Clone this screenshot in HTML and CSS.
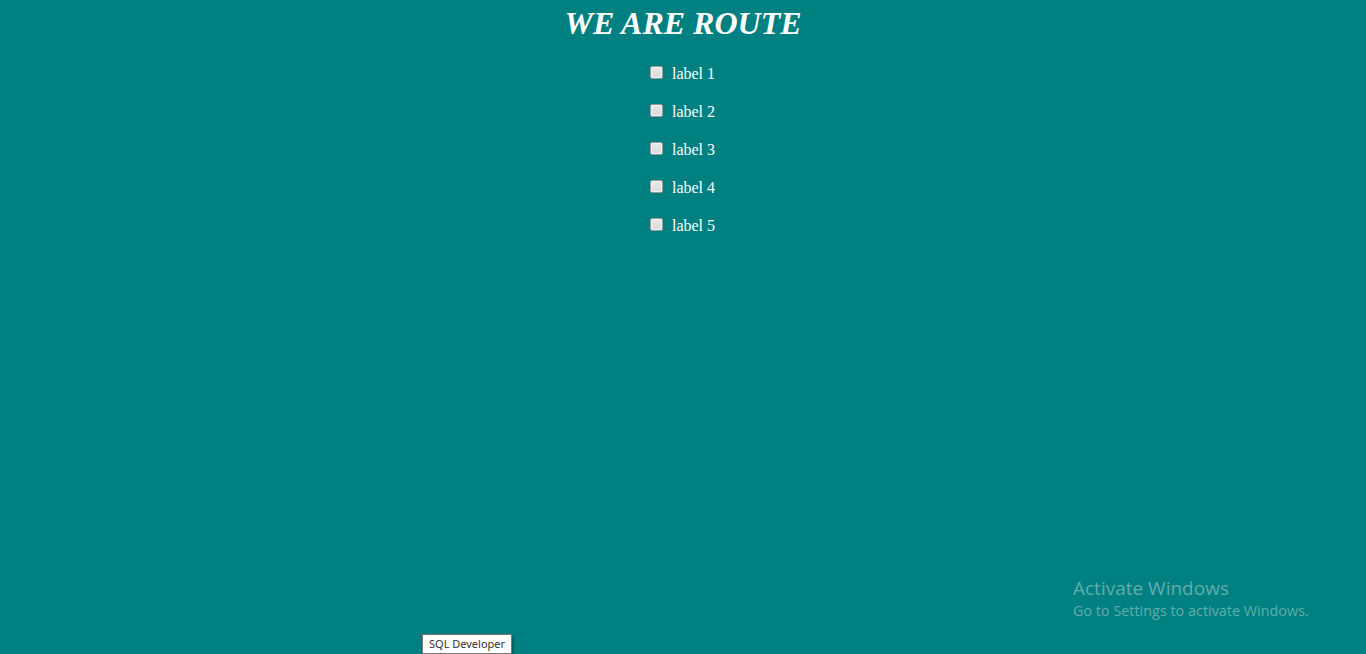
FILE: index.html
```html
<!DOCTYPE html>
<html>
<head>
<meta charset="utf-8">
<title>We Are Route</title>
<link rel="stylesheet" href="styles.css">
</head>
<body>
  <h1 class="title">WE ARE ROUTE</h1>
  <div class="list">
    <div class="row"><input type="checkbox" id="c1" class="box"><label for="c1" class="lbl">label 1</label></div>
    <div class="row"><input type="checkbox" id="c2" class="box"><label for="c2" class="lbl">label 2</label></div>
    <div class="row"><input type="checkbox" id="c3" class="box"><label for="c3" class="lbl">label 3</label></div>
    <div class="row"><input type="checkbox" id="c4" class="box"><label for="c4" class="lbl">label 4</label></div>
    <div class="row"><input type="checkbox" id="c5" class="box"><label for="c5" class="lbl">label 5</label></div>
  </div>
  <div class="watermark">
    <div class="wm-title">Activate Windows</div>
    <div class="wm-sub">Go to Settings to activate Windows.</div>
  </div>
  <div class="tooltip">SQL Developer</div>
</body>
</html>
```
FILE: styles.css
```css
html, body {
  margin: 0;
  padding: 0;
  height: 100%;
}
body {
  background: #008080;
  color: #ffffff;
  font-family: "Liberation Serif", "Times New Roman", serif;
  overflow: hidden;
}
.title {
  margin: 0;
  padding-top: 5px;
  font-size: 32px;
  line-height: 37px;
  font-style: italic;
  font-weight: bold;
  text-align: center;
}
.list {
  margin-top: 23px;
  display: flex;
  flex-direction: column;
}
.row {
  height: 38px;
  display: flex;
  justify-content: center;
  align-items: flex-start;
  gap: 8px;
}
.box {
  -webkit-appearance: none;
  appearance: none;
  margin: 1px 0 0 -1px;
  width: 13px;
  height: 13px;
  box-sizing: border-box;
  border: 1px solid #9a9a9a;
  border-radius: 2px;
  background: linear-gradient(#e9e9e9, #d9d9d9);
  box-shadow: inset 0 0 0 1px #f2f2f2;
}
.lbl {
  font-size: 16px;
  line-height: 18px;
  margin-left: 1px;
}
.watermark {
  position: absolute;
  left: 1073px;
  top: 576px;
  font-family: "Open Sans", "Noto Sans", sans-serif;
  color: rgba(255, 255, 255, 0.38);
}
.wm-title {
  font-size: 19px;
  line-height: 24px;
}
.wm-sub {
  font-size: 14.4px;
  line-height: 21px;
}
.tooltip {
  position: absolute;
  left: 422px;
  top: 634px;
  height: 20px;
  box-sizing: border-box;
  padding: 0 6px;
  background: #ffffff;
  border: 1px solid #767676;
  color: #333333;
  font-family: "Noto Sans", "Liberation Sans", sans-serif;
  font-size: 11px;
  line-height: 18px;
  box-shadow: 2px 2px 2px rgba(0,0,0,0.25);
}
```
